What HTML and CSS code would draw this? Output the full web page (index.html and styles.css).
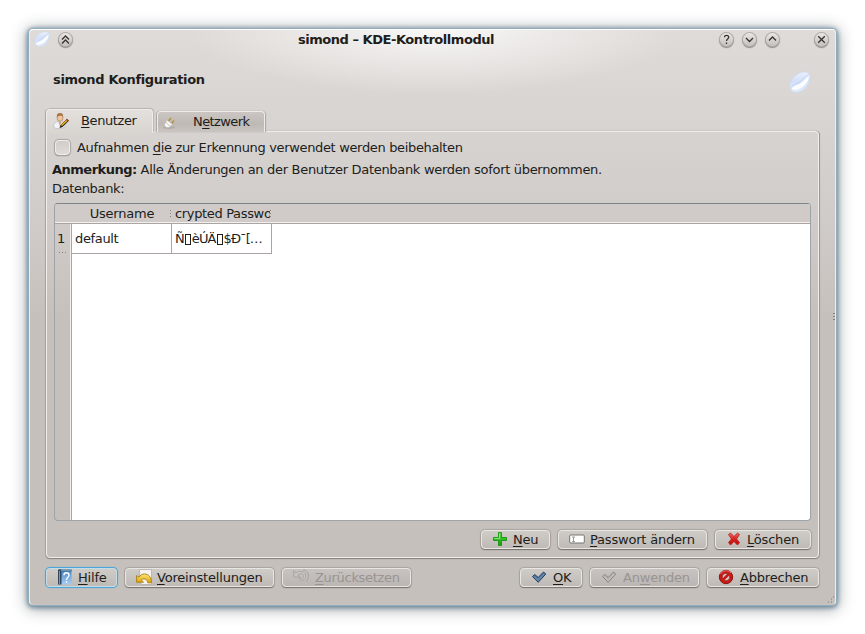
FILE: index.html
```html
<!DOCTYPE html>
<html lang="de">
<head>
<meta charset="utf-8">
<title>simond – KDE-Kontrollmodul</title>
<link rel="stylesheet" href="styles.css">
</head>
<body>
<svg class="defs" width="0" height="0">
  <defs>
    <linearGradient id="bean" x1="0" y1="0" x2="0" y2="1"><stop offset="0" stop-color="#eaf0fc"/><stop offset=".45" stop-color="#d3e0f8"/><stop offset="1" stop-color="#e3ecfc"/></linearGradient>
    <linearGradient id="green" x1="0" y1="0" x2="0" y2="1"><stop offset="0" stop-color="#5bd83f"/><stop offset="1" stop-color="#159a10"/></linearGradient>
    <linearGradient id="red" x1="0" y1="0" x2="0" y2="1"><stop offset="0" stop-color="#ef6d68"/><stop offset=".5" stop-color="#d92020"/><stop offset="1" stop-color="#ba0c0c"/></linearGradient>
    <linearGradient id="gold" x1="0" y1="0" x2="0" y2="1"><stop offset="0" stop-color="#ffe879"/><stop offset="1" stop-color="#dfa000"/></linearGradient>
    <linearGradient id="book" x1="0" y1="0" x2="0" y2="1"><stop offset="0" stop-color="#4288c6"/><stop offset="1" stop-color="#a7cdf8"/></linearGradient>
    <symbol id="logo" viewBox="0 0 24 24">
      <path d="M1 16C1 9 9 1 17 1C21 1 23.500 3.500 23.300 7.500C23 15 16 23 8 23.300C4 23.400 1 20.500 1 16Z" fill="url(#bean)" stroke="#cbd9f3" stroke-width=".8"/>
      <path d="M3 19C5 15.500 9 16 13 13S18 8 21.500 5.500C22 11 17.500 16 13 18.500S5 21.500 3 19Z" fill="#fcfdff"/>
      <path d="M2.500 17.500C6 13.500 10 14 14 10S18 5.500 21.500 4" fill="none" stroke="#bdcff0" stroke-width=".9"/>
    </symbol>
  </defs>
</svg>
<main class="window">
  <header class="titlebar">
    <svg class="app-icon" width="16" height="16"><use href="#logo"/></svg>
    <span class="knob shade"><svg width="13" height="13" viewBox="1 1 13 13"><path d="M4 7.500 7.500 4 11 7.500M4 11.500 7.500 8 11 11.500"/></svg></span>
    <h1>simond – KDE-Kontrollmodul</h1>
    <span class="knob"><svg width="13" height="13" viewBox="1 1 13 13"><path d="M5.500 5.300C5.500 2.700 9.700 2.800 9.700 5.300 9.700 7 7.500 6.900 7.500 9M7.500 10.500V12"/></svg></span>
    <span class="knob"><svg width="13" height="13" viewBox="1 1 13 13"><path d="M4 6 7.500 9.500 11 6"/></svg></span>
    <span class="knob"><svg width="13" height="13" viewBox="1 1 13 13"><path d="M4 8.500 7.500 5 11 8.500"/></svg></span>
    <span class="knob close"><svg width="13" height="13" viewBox="1 1 13 13"><path d="M4.200 4.200 10.800 10.800M10.800 4.200 4.200 10.800"/></svg></span>
  </header>
  <div class="heading">
    <h2>simond Konfiguration</h2>
    <svg width="22" height="22"><use href="#logo"/></svg>
  </div>
  <nav class="tabs">
    <div class="tab active">
      <svg width="16" height="16" viewBox="0 0 16 16"><path d="M.5 14C.5 10 3 8.500 6.500 8.500S12 10 12 14L9 15.500H3Z" fill="#f1f3f7" stroke="#b9bcc4" stroke-width=".7"/><path d="m5.500 9 1.200 4 1.800-4Z" fill="#d7a477"/><ellipse cx="7" cy="4.300" rx="3" ry="4" fill="#eec59f" stroke="#a5754c" stroke-width=".6"/><path d="M4 4C3.500 0 6 .2 7.500.2S10.500 1 10 4C9 2 6 3 4 4Z" fill="#a87547"/><path d="m6.500 15 1-3 6.500-6 1.800 1.800-6.500 6.500Z" fill="#302719"/><path d="m8.500 12.500 5.700-5.200" stroke="#eaba20" stroke-width="1.500"/><path d="m13.500 6.300 1.700 1.600" stroke="#c22d24" stroke-width="1.400"/></svg>
      <span><u>B</u>enutzer</span>
    </div>
    <div class="tab">
      <svg width="16" height="16" viewBox="0 0 16 16"><ellipse cx="7" cy="13.500" rx="6" ry="1.500" fill="#b1aca8"/><path d="m6.500 7 2.500-3M9.500 9.500 12 6.500" stroke="#b69134" stroke-width="1.500"/><path d="M5 6 10.500 10.500 7.500 13C5 14.500 2 13 2.500 10Z" fill="#f7f7f5" stroke="#bdb9b5" stroke-width=".7"/><path d="m4 8.500 4 3.500" stroke="#c8c5c2"/></svg>
      <span>N<u>e</u>tzwerk</span>
    </div>
  </nav>
  <section class="pane">
    <label class="option"><span class="checkbox"></span><span>Aufnahmen <u>d</u>ie zur Erkennung verwendet werden beibehalten</span></label>
    <p class="note"><b>Anmerkung:</b> Alle Änderungen an der Benutzer Datenbank werden sofort übernommen.</p>
    <p class="label">Datenbank:</p>
    <div class="table">
      <div class="head corner"></div>
      <div class="head grip">Username</div>
      <div class="head clipped grip"><span>crypted Passwo</span></div>
      <div class="head"></div>
      <div class="index">1</div>
      <div class="cell">default</div>
      <div class="cell cipher">Ñ<i></i>èÚÄ<i></i>$Ð¯[…</div>
    </div>
    <div class="actions">
      <button class="new"><svg width="16" height="16"><path d="M6.500 1.500h3v5h5v3h-5v5h-3v-5h-5v-3h5Z" fill="url(#green)" stroke="#169512" stroke-width=".9" stroke-linejoin="round"/><path d="M7.500 2.500v5H2.500" fill="none" stroke="#8aec70"/></svg><span><u>N</u>eu</span></button>
      <button class="password"><svg width="16" height="16"><rect x=".7" y="4" width="14.600" height="8" rx="1" fill="#fff" stroke="#777471"/><path d="M3 6h3M3 10.500h3M4.500 6v4.500" stroke="#8a8784" stroke-width=".8"/></svg><span><u>P</u>asswort ändern</span></button>
      <button class="delete"><svg width="16" height="16"><path d="m2.500 3.500 2-1.500L8 5.500 11.500 2l2 1.500-3 4.500 3 3.500-2 2.500L8 10.500 4.500 14l-2-2.500 3-3.500Z" fill="url(#red)" stroke="#bb1717" stroke-width=".8" stroke-linejoin="round"/></svg><span><u>L</u>öschen</span></button>
    </div>
  </section>
  <footer class="footer">
    <button class="help focused"><svg width="16" height="16"><path d="M1 1h13.500v14.500H1Z" fill="url(#book)"/><path d="M1 .5h3.500v15H1Z" fill="#34475a"/><path d="M2.500 2v13" stroke="#8696a4"/><path d="M2 .5h12.500v1.700H3" fill="#295577"/><path d="M4 1.200h10" stroke="#b7d2e5" stroke-width=".7"/><path d="M7 6.200C7 3 12 3 12 6.200 12 8.500 9.500 8 9.500 11M9.500 12v1.800" fill="none" stroke="#fff" stroke-width="1.400"/></svg><span><u>H</u>ilfe</span></button>
    <button class="defaults"><svg width="16" height="16"><path d="M3.500.5h12v15H6L3.500 13Z" fill="#f4f3f1" stroke="#aaa6a3" stroke-width=".7"/><path d="M.6 6.500v6.700h6.900L5.300 11C7.500 9 11 9.500 11.800 13.800h3.400C16 8.500 12.500 5 8.500 5 6 5 4.200 6.200 3 8.300Z" fill="url(#gold)" stroke="#a87c0c" stroke-width=".9" stroke-linejoin="round"/></svg><span><u>V</u>oreinstellungen</span></button>
    <button class="reset disabled"><svg width="16" height="16"><path d="M.8 1.500v6.500h6L4.800 6C8 3.500 11 5 10.500 7.500S7.500 9.500 6 8.500C6 11 9 12 11 10.500c3-2.500 2-7-2-8-2.500-.6-4.500 0-6 1.500Z" fill="#c8c4c0" stroke="#a5a29f" stroke-width=".9"/><path d="M10 1c5.500 0 7 6.500 3.500 11.500" fill="none" stroke="#a5a29f"/></svg><span><u>Z</u>urücksetzen</span></button>
    <button class="ok"><svg width="16" height="16"><path d="m1.500 7.500 2.300-2 3.400 3L12.500 3 14.800 5 7.200 13.300Z" fill="#56779f" stroke="#243f61" stroke-linejoin="round"/><path d="m2.800 7.500 4.400 4L13.300 5" fill="none" stroke="#7593ba"/></svg><span><u>O</u>K</span></button>
    <button class="apply disabled"><svg width="16" height="16"><path d="m1.500 7.500 2.300-2 3.400 3L12.500 3 14.800 5 7.200 13.300Z" fill="#b5b2af" stroke="#898784" stroke-linejoin="round"/><path d="m2.800 7.500 4.400 4L13.300 5" fill="none" stroke="#c9c6c3"/></svg><span>An<u>w</u>enden</span></button>
    <button class="cancel"><svg width="16" height="16"><circle cx="8" cy="8" r="6.700" fill="#c91a16" stroke="#8d1512"/><circle cx="8" cy="8" r="3.800" fill="#d0cbc6" stroke="#8d1512" stroke-width=".7"/><path d="m4.800 11 6-6" stroke="#c91a16" stroke-width="2.500"/><path d="M2.500 5C4 1.500 10 .5 13 4" fill="none" stroke="#ed7771"/></svg><span><u>A</u>bbrechen</span></button>
  </footer>
  <i class="edge-dots"></i>
  <svg class="size-grip" width="8" height="8"><path d="M1 6h1M4 6h1M4 3h1M6 1h1" stroke="#777"/></svg>
</main>
</body>
</html>
```
FILE: styles.css
```css
* { box-sizing: border-box; }
body { margin: 0; height: 634px; padding: 29px; overflow: hidden; background: #fff; color: #211d1b; font: 13px/16px "DejaVu Sans", sans-serif; letter-spacing: -.34px; }
.defs { position: absolute; }
h1, h2, p { margin: 0; font-size: 13px; line-height: 16px; white-space: nowrap; }
svg { display: block; flex: none; }
u { text-decoration: underline 1px; text-underline-offset: 2px; text-decoration-skip-ink: none; }
.window { position: relative; width: 807px; height: 576px; display: flex; flex-direction: column; border-radius: 4px; border: 1px solid #efedeb; border-top-color: #fff; border-bottom-color: #c8c5c1;
  background: radial-gradient(ellipse 245px 64px at 403px 0, rgba(255,255,255,.8), rgba(255,255,255,.38) 50%, rgba(255,255,255,0)), linear-gradient(#dfdbd8 0, #d5d1ce 125px, #cfcac7 205px, #c6c0bc 290px);
  box-shadow: 0 0 0 1px #8fadbf, 0 1px 4px 2px rgba(75,110,132,.7), 0 2px 16px 2px rgba(60,70,75,.48); }
.titlebar { height: 32px; display: flex; align-items: flex-start; padding: 1px 7px 0 4px; }
.app-icon { margin-top: 0; }
.knob { width: 13px; height: 13px; border-radius: 50%; margin: 2px 0 0 10px; background: linear-gradient(#e8e6e4, #c5c1bd); box-shadow: 0 0 0 1px #b1adaa, 0 1px 1px 1px #8f8b88; }
.knob svg { fill: none; stroke: #37322f; stroke-width: 1.3; }
.shade { margin-left: 9px; }
.titlebar h1 { flex: 1; text-align: center; margin: 1px -1px 0 9px; letter-spacing: -.45px; }
.close { margin-left: 36px; }
.heading { height: 46px; display: flex; justify-content: space-between; padding: 10px 24px 0 23px; letter-spacing: -.34px; }
.heading svg { margin-top: -1px; }
.tabs { height: 24px; display: flex; align-items: flex-end; padding-left: 16px; z-index: 1; }
.tab { display: flex; align-items: center; width: 108px; height: 21px; margin-left: 4px; padding: 0 0 1px 4px; border: 1px solid #eeecea; border-bottom: 0; border-radius: 4px 4px 0 0; background: linear-gradient(#cbc6c3, #bfb9b5 60%, #cac5c1); box-shadow: 1px 0 1px #aaa5a1, -1px 0 1px #aaa5a1; letter-spacing: -.6px; }
.tab span { margin-left: 15px; }
.tab.active { height: 24px; width: 107px; margin: 0 0 -1px; padding: 0 0 2px 6px; background: linear-gradient(#e3e0dd, #d8d5d1); box-shadow: -1px 0 1px #aaa5a1, 1px -1px 1px #bbb6b2; clip-path: inset(-2px -2px 0); letter-spacing: -.4px; }
.active span { margin-left: 12px; }
.pane { width: 773px; height: 427px; margin: -1px 0 0 16px; padding: 8px 7px 0 7px; border: 1px solid #f0eeec; border-radius: 4px; box-shadow: 0 1px 1px #85807c, 1px 0 1px #999490, -1px 0 1px #aaa5a1; }
.option { display: flex; align-items: center; height: 16px; }
.checkbox { width: 15px; height: 15px; margin: -1px 7px 0 1px; border: 1px solid #efedeb; border-radius: 4px; background: linear-gradient(#d0ccc8, #dedbd8); box-shadow: 0 0 1px 1px #aaa5a1, 0 1px 1px #817b77; }
.note { margin-top: 6px; margin-left: -2px; letter-spacing: -.31px; }
.note b { letter-spacing: -.5px; }
.label { margin-top: 3px; margin-left: -2px; }
.table { display: grid; grid-template: 20px 30px 1fr / 17px 100px 100px 1fr; width: 757px; height: 318px; margin-top: 6px; border: 1px solid #9ca4a9; border-top-color: #7c858b; border-radius: 4px; overflow: hidden; background: linear-gradient(90deg, transparent 15px, #f2f0ef 15px 16px, #aaa5a3 16px 17px, #fff 17px); }
.head { background: #d0cbc8; border-bottom: 1px solid #aaa5a3; box-shadow: inset 0 -1px #f2f0ef; padding-top: 2px; text-align: center; white-space: nowrap; min-width: 0; }
.head:not(.clipped) { letter-spacing: -.2px; }
.grip { background: repeating-linear-gradient(#85817e 0 1px, transparent 1px 3px) 98px 6px / 1px 9px no-repeat, #d0cbc8; }
.clipped span { display: block; width: 95px; margin-left: 3px; overflow: hidden; text-align: left; }
.index { padding: 7px 0 0 2px; background: repeating-linear-gradient(90deg, #85817e 0 1px, transparent 1px 3px) 4px 28px / 9px 1px no-repeat; }
.cell { padding: 7px 0 0 3px; border-right: 1px solid #aaa5a3; border-bottom: 1px solid #aaa5a3; white-space: nowrap; }
.cipher { letter-spacing: -.9px; }
.cipher i { display: inline-block; width: 6px; height: 11px; margin: 0 1px; border: 1px solid #211d1b; vertical-align: -2px; }
.actions { display: flex; justify-content: flex-end; gap: 8px; margin: 9px 0 0; }
button { display: flex; align-items: center; gap: 5px; height: 19px; padding: 1px 0 0 10px; border: 1px solid #e8e6e3; border-radius: 4px; background: linear-gradient(#cfccc8, #bfbab6); box-shadow: 0 1px 1px #78736f, 0 0 1px 1px #aaa5a1; color: #211d1b; font: 13px/16px "DejaVu Sans", sans-serif; letter-spacing: -.2px; white-space: nowrap; }
button svg { margin-top: -2px; }
.new { width: 69px; } .password { width: 149px; } .delete { width: 96px; }
.footer { display: flex; gap: 8px; margin: 10px 0 0 16px; width: 773px; }
.help { width: 71px; } .defaults { width: 149px; } .reset { width: 129px; letter-spacing: -.3px; }
.reset svg + span { margin-left: 1px; }
.ok { width: 62px; margin-left: auto; } .apply { width: 109px; } .cancel { width: 112px; }
.ok span, .apply span, .cancel span { margin-left: 1px; }
.focused { border-color: #c6dce6; box-shadow: 0 0 1px 1px #3ca3db; }
.disabled { color: #989491; background: linear-gradient(#c8c3c0, #bbb6b3); }
.edge-dots { position: absolute; right: 0; top: 283px; width: 2px; height: 9px; background: repeating-linear-gradient(#85817e 0 1px, transparent 1px 3px); }
.size-grip { position: absolute; right: 0; bottom: 0; }
```
